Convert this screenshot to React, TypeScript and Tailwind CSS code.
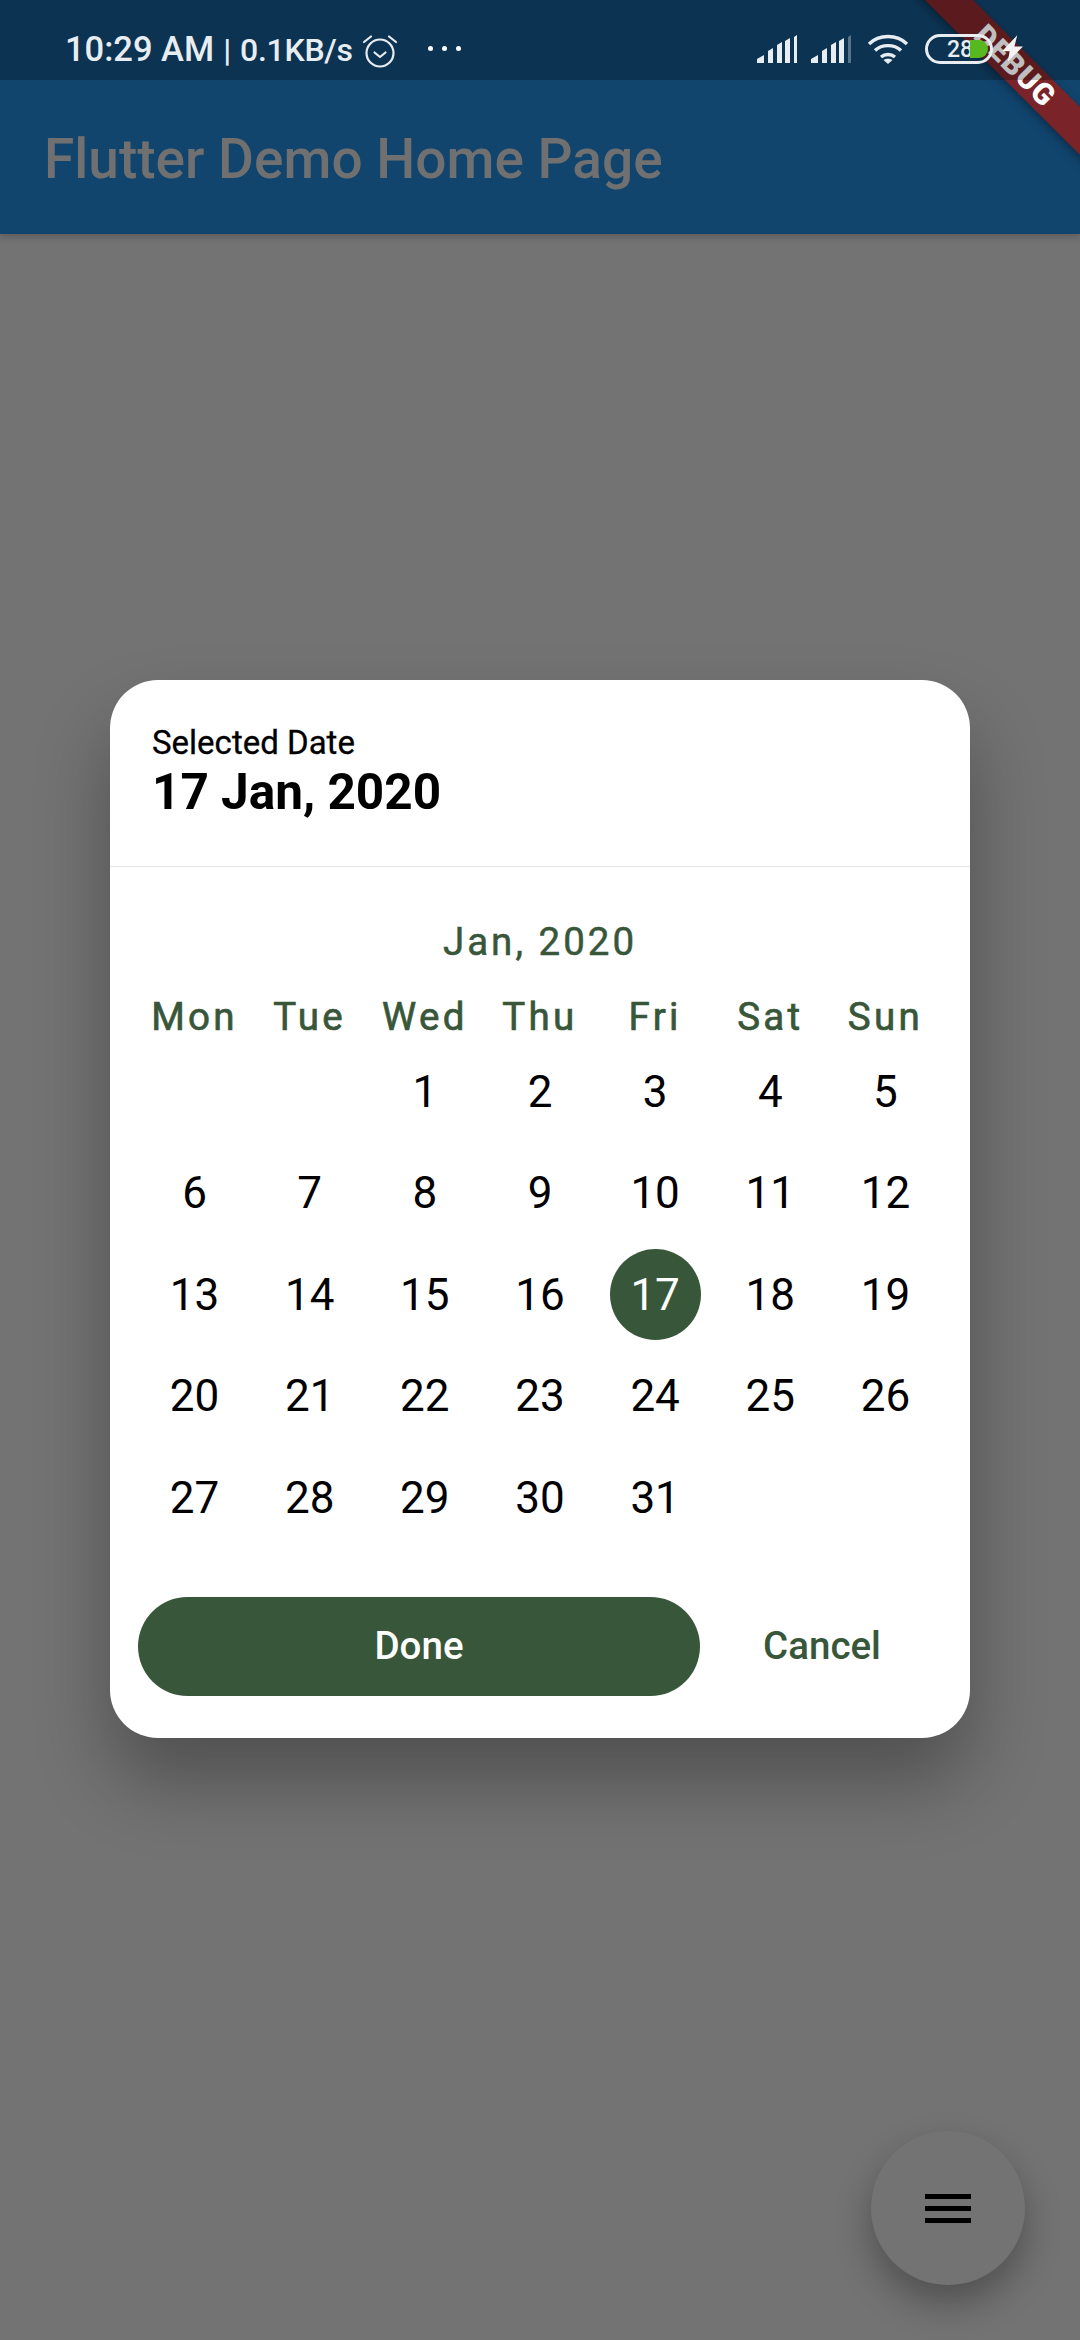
import React from "react";

const weekDays = ["Mon", "Tue", "Wed", "Thu", "Fri", "Sat", "Sun"];
// Jan 2020 starts on a Wednesday
const days: (number | null)[] = [null, null, ...Array.from({ length: 31 }, (_, i) => i + 1)];

const SignalBars: React.FC<{ dimLast?: boolean }> = ({ dimLast }) => (
  <svg width="40" height="30" viewBox="0 0 40 30" fill="#e8edf2">
    <path d="M0 29v-4l7-4v8z" />
    <path d="M11 29V17l5-3v15z" />
    <path d="M20 29V11l5-3v21z" />
    <path d="M28 29V7l5-3v25z" />
    <path d="M37 29V3l3-2v28z" opacity={dimLast ? 0.35 : 1} />
  </svg>
);

const StatusBar: React.FC = () => (
  <div className="relative z-20 flex h-[80px] items-start bg-black/25 pl-[65px] pt-[33px] text-[#e8edf2]">
    <span className="flex items-baseline whitespace-nowrap font-medium leading-[33px]">
      <span className="text-[34.500px]">10:29 AM</span>
      <span className="ml-[9px] text-[32px]">|</span>
      <span className="ml-[9px] text-[32px] tracking-[-0.300px]">0.1KB/s</span>
    </span>
    <svg className="ml-[9px]" width="36" height="36" viewBox="0 0 36 36" fill="none" stroke="#e8edf2" strokeWidth="2.2">
      <circle cx="18" cy="20" r="13.5" />
      <path d="M12.5 19.5l5.5 4.5 5.5-4.5" strokeLinecap="round" strokeLinejoin="round" />
      <path d="M2 9l7-5.500M34 9l-7-5.500" strokeLinecap="round" />
    </svg>
    <div className="ml-[30px] mt-[13px] flex gap-[9px]">
      <span className="h-[5px] w-[5px] rounded-full bg-white" />
      <span className="h-[5px] w-[5px] rounded-full bg-white" />
      <span className="h-[5px] w-[5px] rounded-full bg-white" />
    </div>
    <div className="ml-auto mr-[87px] flex items-center">
      <SignalBars />
      <span className="w-[14px]" />
      <SignalBars dimLast />
      <svg className="ml-[16px]" width="42" height="32" viewBox="0 0 42 32" fill="none" stroke="#e8edf2" strokeWidth="3.4">
        <path d="M2 11C12 1 30 1 40 11" />
        <path d="M8 17.500C15 11 27 11 34 17.500" />
        <path d="M14 24c4-3.400 10-3.400 14 0" />
        <path d="M21 31l-4.500-4c2.500-1.600 6.500-1.600 9 0z" fill="#e8edf2" stroke="none" />
      </svg>
      <div className="relative ml-[16px] flex h-[30px] w-[68px] items-center rounded-full border-[3px] border-[#e8edf2] pl-[19px]">
        <span className="text-[23px] font-medium leading-none">28</span>
        <span className="absolute left-[42px] top-[3px] h-[18px] w-[18px] rounded-r-full bg-[#57b81f]" />
      </div>
    </div>
    {/* charging bolt */}
    <svg className="absolute left-[1002px] top-[34px]" width="21" height="29" viewBox="0 0 22 28" fill="#f4f4f4">
      <path d="M16 0L0 17h8l-2 11L22 12h-9z" />
    </svg>
  </div>
);

const DebugBanner: React.FC = () => (
  <div className="absolute left-[870px] top-[49px] z-10 flex h-[34px] w-[290px] rotate-45 items-center justify-center bg-[#7a2329] shadow-[0_3px_10px_rgba(0,0,0,0.35)]">
    <span className="text-[30px] font-black leading-none tracking-[1px] text-white">DEBUG</span>
  </div>
);

const DatePicker: React.FC = () => (
  <div className="mx-auto h-[1058px] w-[860px] rounded-[48px] bg-white shadow-[0_44px_76px_rgba(0,0,0,0.3)]">
    <div className="h-[187px] border-b border-[#e6e6e6] pl-[42px] pt-[43px] text-black">
      <div className="text-[33px] leading-[40px] [-webkit-text-stroke:0.3px]">Selected Date</div>
      <div className="text-[49.500px] font-bold leading-[58px]">17 Jan, 2020</div>
    </div>

    <div className="px-[27px] pt-[53px]">
      <div className="mb-[30px] text-center text-[38.500px] leading-[44px] tracking-[3px] text-[#38563a] [-webkit-text-stroke:0.5px]">Jan, 2020</div>
      <div className="grid grid-cols-7">
        {weekDays.map((d) => (
          <div key={d} className="h-[47px] text-center text-[38.500px] leading-[46px] tracking-[3.300px] text-[#38563a] [-webkit-text-stroke:0.7px]">
            {d}
          </div>
        ))}
      </div>
      <div className="grid auto-rows-[101.500px] grid-cols-7">
        {days.map((d, i) => (
          <div key={i} className="flex items-center justify-center">
            {d !== null &&
              (d === 17 ? (
                <div className="flex h-[91px] w-[91px] items-center justify-center rounded-full bg-[#38563a] text-[44px] text-white">
                  {d}
                </div>
              ) : (
                <span className="text-[44px] text-black">{d}</span>
              ))}
          </div>
        ))}
      </div>
    </div>

    <div className="mt-[48px] flex items-center pl-[28px]">
      <button className="h-[99px] w-[562px] rounded-full bg-[#38563a] text-[38.500px] font-medium text-white">Done</button>
      <button className="ml-[32px] w-[180px] text-[38.500px] font-medium text-[#38563a]">Cancel</button>
    </div>
  </div>
);

export default function App() {
  return (
    <div className="relative h-[2340px] w-[1080px] overflow-hidden bg-[#737373] font-['Roboto',sans-serif]">
      <DebugBanner />
      <div className="h-[234px] bg-[#11456e] shadow-[0_2px_8px_rgba(0,0,0,0.25)]">
        <StatusBar />
        <h1 className="pl-[44px] pt-[44px] text-[55px] font-medium leading-[70px] text-[#707070]">Flutter Demo Home Page</h1>
      </div>

      <div className="pt-[446px]">
        <DatePicker />
      </div>

      {/* FAB */}
      <button className="absolute left-[871px] top-[2131px] flex h-[154px] w-[154px] flex-col items-center justify-center gap-[7px] rounded-full bg-[#737373] shadow-[0_18px_36px_rgba(0,0,0,0.3)]">
        <span className="h-[5px] w-[46px] bg-black" />
        <span className="h-[5px] w-[46px] bg-black" />
        <span className="h-[5px] w-[46px] bg-black" />
      </button>
    </div>
  );
}
